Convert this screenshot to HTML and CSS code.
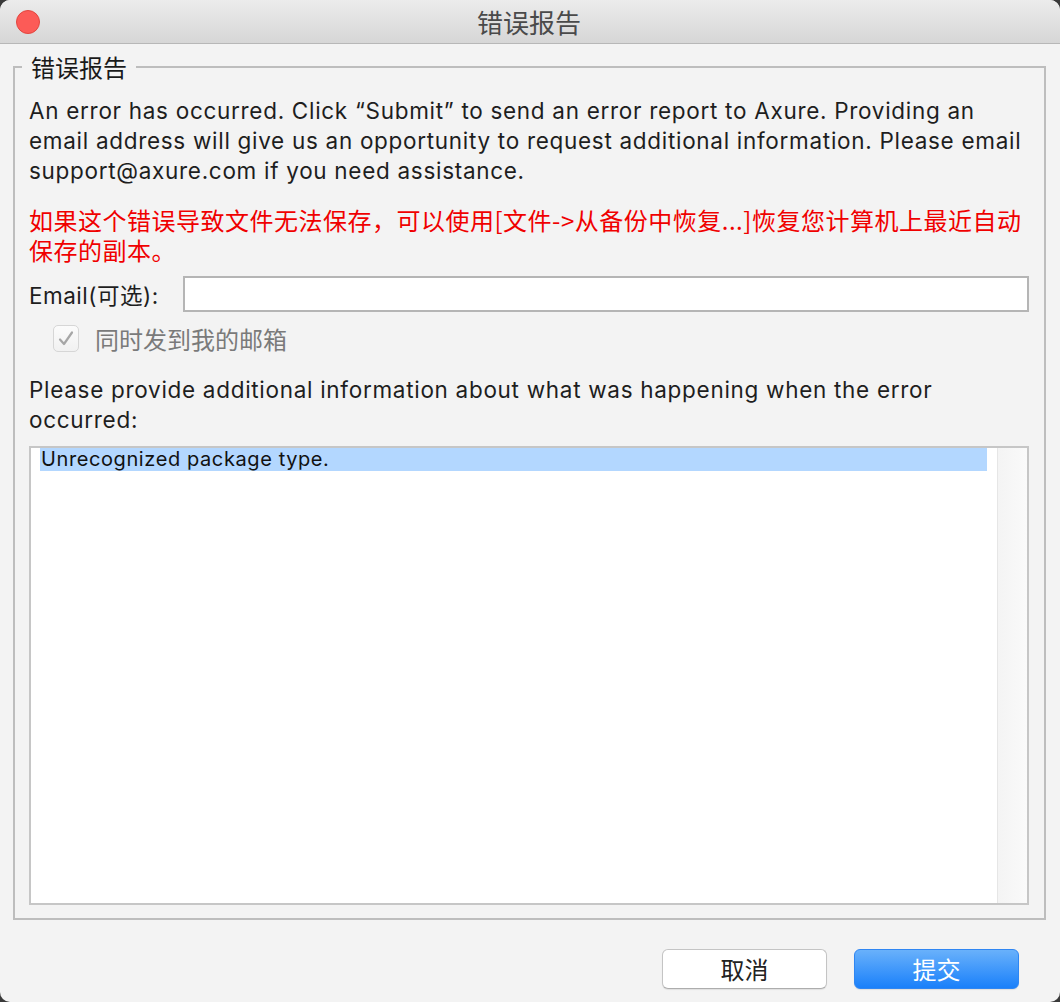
FILE: index.html
```html
<!DOCTYPE html>
<html lang="zh">
<head>
<meta charset="utf-8">
<title>错误报告</title>
<link rel="stylesheet" href="styles.css">
</head>
<body>
<div class="window">
  <div class="titlebar">
    <span class="close"></span>
    <div class="title">错误报告</div>
  </div>
  <fieldset class="group">
    <legend class="legend">错误报告</legend>
    <p class="intro">An error has occurred. Click “Submit” to send an error report to Axure. Providing an<br>email address will give us an opportunity to request additional information. Please email<br>support@axure.com if you need assistance.</p>
    <p class="warn">如果这个错误导致文件无法保存，可以使用[文件-&gt;从备份中恢复...]恢复您计算机上最近自动<br>保存的副本。</p>
    <div class="email-row">
      <label class="email-label">Email(可选):</label>
      <div class="input"></div>
    </div>
    <div class="check-row">
      <span class="checkbox"><svg width="20" height="20" viewBox="0 0 20 20"><path d="M4 10.5 L8 15 L16 3.5" fill="none" stroke="#a6a6a6" stroke-width="2.2" stroke-linecap="round" stroke-linejoin="round"/></svg></span>
      <span class="check-label">同时发到我的邮箱</span>
    </div>
    <p class="prompt">Please provide additional information about what was happening when the error<br>occurred:</p>
    <div class="textarea">
      <div class="ta-content"><div class="sel">Unrecognized package type.</div></div>
      <div class="scrollbar"></div>
    </div>
  </fieldset>
  <div class="buttons">
    <button class="btn">取消</button>
    <button class="btn primary">提交</button>
  </div>
</div>
</body>
</html>
```
FILE: styles.css
```css
html, body {
  margin: 0;
  padding: 0;
  background: #3a3a3a;
}
body {
  width: 1060px;
  height: 1002px;
  overflow: hidden;
  font-family: "Inter", "Noto Sans CJK SC", sans-serif;
}
.window {
  width: 1060px;
  height: 1002px;
  background: #f3f3f3;
  border-radius: 10px;
  overflow: hidden;
  display: flex;
  flex-direction: column;
}
.titlebar {
  height: 43px;
  flex: none;
  border-bottom: 1px solid #b7b7b7;
  background: linear-gradient(#ececec, #d6d6d6);
  display: flex;
  align-items: center;
  justify-content: center;
  position: relative;
}
.close {
  position: absolute;
  left: 16px;
  top: 10px;
  width: 22px;
  height: 22px;
  border-radius: 50%;
  background: #fc5b57;
  border: 1px solid #e2463f;
}
.title {
  font-family: "Noto Sans CJK SC", sans-serif;
  font-size: 26px;
  color: #4a4a4a;
  line-height: 43px;
  margin-left: -2px;
}
.group {
  margin: 8px 14px 0 13px;
  padding: 14px 15px 13px 14px;
  border: 2px solid #bdbdbd;
  min-width: 0;
}
.legend {
  font-family: "Noto Sans CJK SC", sans-serif;
  font-size: 24px;
  line-height: 30px;
  color: #1a1a1a;
  padding: 0 9px;
  margin-left: -7px;
}
p {
  margin: 0;
  white-space: nowrap;
}
.intro, .prompt {
  font-size: 22.5px;
  letter-spacing: 0.7px;
  line-height: 30px;
  color: #1e1e1e;
}
.warn {
  margin-top: 19px;
  font-family: "Noto Sans CJK SC", sans-serif;
  font-size: 24px;
  line-height: 30px;
  color: #f00000;
  letter-spacing: 0.5px;
}
.email-row {
  margin-top: 11px;
  display: flex;
  align-items: center;
  height: 36px;
}
.email-label {
  width: 154px;
  flex: none;
  font-size: 22.5px;
  letter-spacing: 0.5px;
  color: #1e1e1e;
}
.input {
  flex: 1;
  height: 32px;
  background: #fff;
  border: 2px solid #b5b5b5;
}
.check-row {
  margin-top: 13px;
  display: flex;
  align-items: center;
  height: 27px;
}
.checkbox {
  margin-left: 24px;
  width: 24px;
  height: 25px;
  border: 1px solid #d6d6d6;
  border-radius: 5px;
  background: linear-gradient(#fbfbfb, #f1f1f1);
  display: flex;
  align-items: center;
  justify-content: center;
}
.check-label {
  margin-left: 16px;
  font-family: "Noto Sans CJK SC", sans-serif;
  font-size: 24px;
  color: #7a7a7a;
}
.prompt {
  margin-top: 23px;
}
.textarea {
  margin-top: 11px;
  height: 455px;
  border: 2px solid #c6c6c6;
  background: #fff;
  display: flex;
}
.ta-content {
  flex: 1;
  padding: 0 10px 0 9px;
}
.sel {
  background: #b3d7ff;
  height: 23px;
  line-height: 23px;
  font-size: 20px;
  letter-spacing: 0.6px;
  color: #111;
  padding-left: 1px;
}
.scrollbar {
  width: 29px;
  flex: none;
  border-left: 1px solid #e6e6e6;
  background: linear-gradient(90deg, #f4f4f4, #fafafa);
}
.buttons {
  margin-top: 29px;
  margin-right: 41px;
  display: flex;
  justify-content: flex-end;
  gap: 27px;
}
.btn {
  width: 165px;
  height: 40px;
  border: 1px solid #c4c4c4;
  border-bottom-color: #adadad;
  border-radius: 6px;
  background: #fff;
  font-family: "Noto Sans CJK SC", sans-serif;
  font-size: 24px;
  color: #222;
  padding: 0;
  line-height: 38px;
  box-shadow: 0 1px 1px rgba(0,0,0,0.08);
}
.btn.primary {
  background: linear-gradient(#69b1fb, #1a80fa);
  border: 1px solid #2f86f2;
  color: #fff;
}
```
